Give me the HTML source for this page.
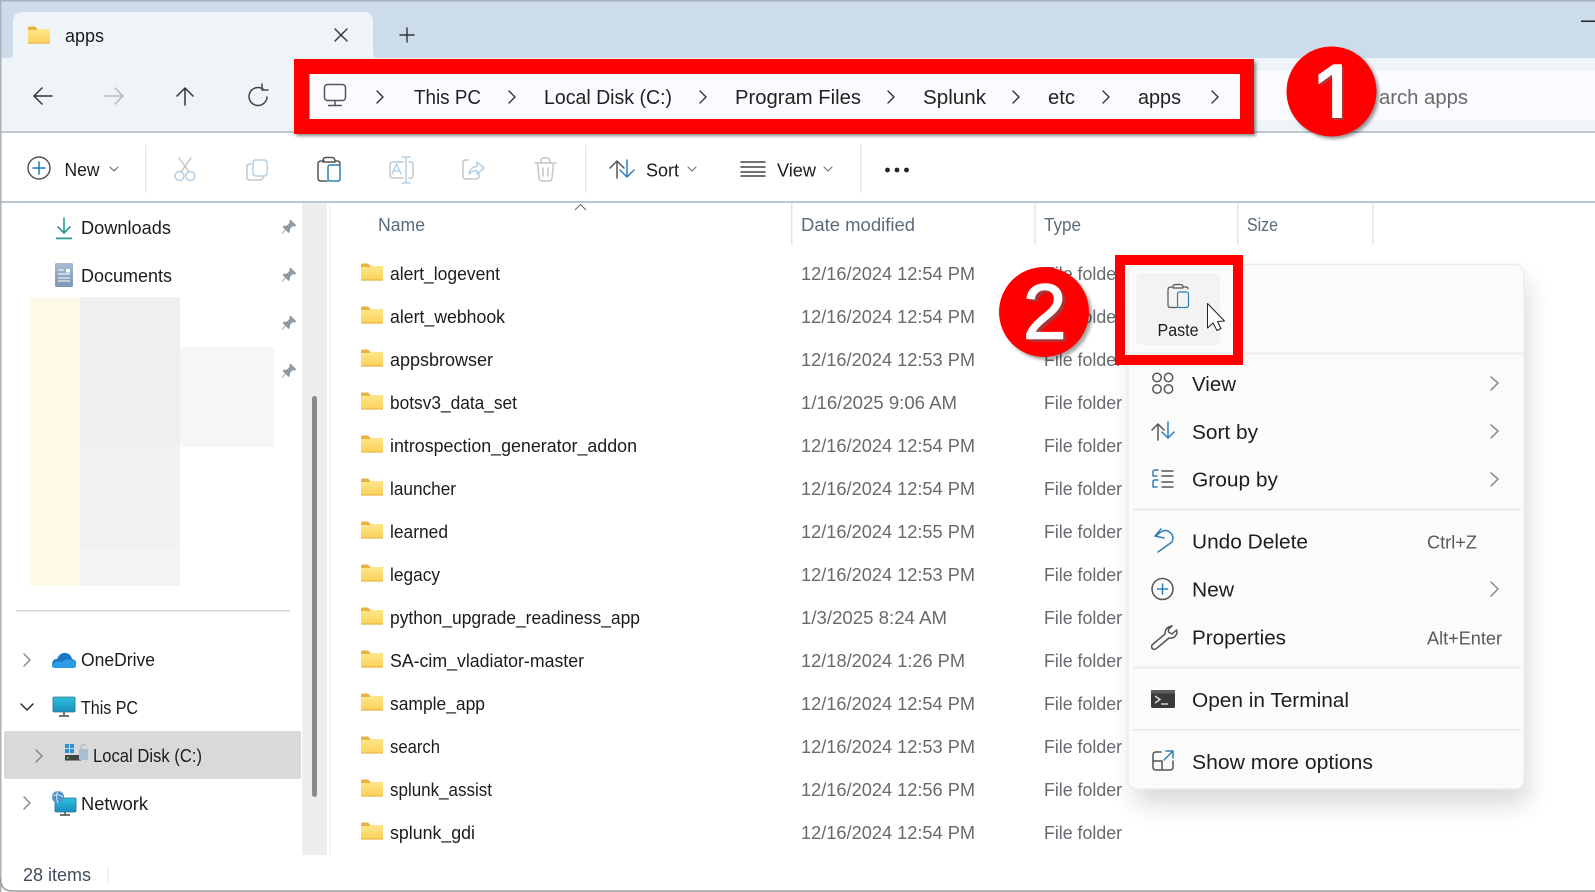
<!DOCTYPE html>
<html><head><meta charset="utf-8"><title>apps</title>
<style>
html,body{margin:0;padding:0;background:#fff;width:1595px;height:892px;overflow:hidden}
svg{display:block}
text{font-family:"Liberation Sans",sans-serif;font-size:18px;fill:#1c1c1c}
.g{fill:#666a6e}
.h{fill:#5c6b7a}
.a{font-size:20.5px;fill:#222}
.m{font-size:20px;fill:#1e1e1e}
.s{fill:#5a5a5a}
.ic{fill:none;stroke:#555;stroke-width:1.5;stroke-linecap:round;stroke-linejoin:round}
.bl{fill:none;stroke:#2f7fb8;stroke-width:1.5;stroke-linecap:round;stroke-linejoin:round}
.dis{fill:none;stroke:#c6c6c6;stroke-width:1.5;stroke-linecap:round;stroke-linejoin:round}
.dbl{fill:none;stroke:#b5d0e6;stroke-width:1.5;stroke-linecap:round;stroke-linejoin:round}
.ch{fill:none;stroke:#333;stroke-width:1.4;stroke-linecap:round;stroke-linejoin:round}
.cg{fill:none;stroke:#8a8a8a;stroke-width:1.5;stroke-linecap:round;stroke-linejoin:round}
</style></head><body>
<svg width="1595" height="892" viewBox="0 0 1595 892" xmlns="http://www.w3.org/2000/svg">
<defs>
<linearGradient id="fg" x1="0" y1="0" x2="0" y2="1"><stop offset="0" stop-color="#ffe68c"/><stop offset="1" stop-color="#fbd158"/></linearGradient>
<linearGradient id="mon" x1="0" y1="0" x2="0" y2="1"><stop offset="0" stop-color="#2cc0dc"/><stop offset="1" stop-color="#1a8fc0"/></linearGradient>
<linearGradient id="doc" x1="0" y1="0" x2="0" y2="1"><stop offset="0" stop-color="#a6bcd4"/><stop offset="1" stop-color="#7d96b2"/></linearGradient>
<symbol id="folder" viewBox="0 0 22 18" width="22" height="18">
<path d="M0 2 Q0 0.5 1.5 0.5 H7 L9.5 3 H22 V8 H0Z" fill="#e8b23c"/>
<path d="M0 4 H8 L10 3 H21 Q22 3 22 4 V16.5 Q22 17.5 21 17.5 H1 Q0 17.5 0 16.5Z" fill="url(#fg)"/>
<rect x="0" y="16.6" width="22" height="1" fill="#e0b040"/>
</symbol>
<symbol id="pin" viewBox="0 0 16 16" width="16" height="16">
<path d="M9.5 0.5 L15.5 6.5 L13.8 7.4 L11.8 7.2 L9 10 L8.8 13 L7.5 14 L4.8 11.2 L1 15 L0.5 14.5 L4.2 10.6 L1.6 8 L2.8 6.8 L5.8 6.6 L8.6 3.8 L8.4 2Z" fill="#8f9aa3"/>
</symbol>
<filter id="sh" x="-20%" y="-20%" width="140%" height="140%"><feGaussianBlur stdDeviation="12"/></filter>
<filter id="sm" x="-10%" y="-10%" width="120%" height="120%"><feGaussianBlur stdDeviation="1.5"/></filter>
<clipPath id="c1"><rect x="1300" y="50" width="60" height="68"/></clipPath>
<clipPath id="c1s"><rect x="1300" y="50" width="60" height="70"/></clipPath>
</defs>

<rect width="1595" height="892" fill="#fff"/>
<!-- title bar -->
<rect x="0" y="0" width="1595" height="58" fill="#cddcea"/>
<rect x="0" y="0" width="1595" height="1.5" fill="#a8b3bd"/>
<path d="M8 58 Q13 58 13 53 V22 Q13 12 23 12 H363 Q373 12 373 22 V53 Q373 58 378 58 Z" fill="#eff4f9"/>
<use href="#folder" x="28" y="26"/>
<text x="65" y="42" textLength="39" lengthAdjust="spacingAndGlyphs">apps</text>
<path d="M335 29 L347 41 M347 29 L335 41" class="ch" stroke="#333"/>
<path d="M407 28 V42 M400 35 H414" class="ch"/>
<rect x="1581" y="20.5" width="14" height="1.5" fill="#222"/>

<!-- nav band -->
<rect x="0" y="58" width="1595" height="73" fill="#eff4f9"/>
<rect x="0" y="131" width="1595" height="2" fill="#bcc7cf"/>
<path d="M52 96 H34 M42 88 L34 96 L42 104" class="ic" stroke="#333" style="stroke:#333"/>
<path d="M105 96 H123 M115 88 L123 96 L115 104" class="dis" style="stroke:#b5b9bd"/>
<path d="M185 105 V88 M177 96 L185 88 L193 96" class="ic" style="stroke:#333"/>
<path d="M263 89 A9 9 0 1 0 267 97 M262 84 V90 H268" class="ic" style="stroke:#444"/>

<!-- search -->
<rect x="1240" y="71" width="355" height="49" fill="#f9fbfe"/>
<text class="a" x="1379" y="104" textLength="89" lengthAdjust="spacingAndGlyphs" style="fill:#6a6a6a">arch apps</text>

<!-- command bar -->
<rect x="0" y="133" width="1595" height="68" fill="#fff"/>
<rect x="0" y="201" width="1595" height="2" fill="#bcc7cf"/>
<circle cx="39" cy="168" r="11" fill="none" stroke="#555" stroke-width="1.5"/>
<path d="M39 162 V174 M33 168 H45" class="bl" style="stroke:#1e78b4"/>
<text x="64.5" y="176" textLength="35" lengthAdjust="spacingAndGlyphs">New</text>
<path d="M110 167 L114 171 L118 167" class="cg" style="stroke-width:1;stroke:#666"/>
<rect x="145" y="145" width="1.5" height="48" fill="#e8e8e8"/>
<!-- scissors -->
<path d="M179 158 L189 172 M191 158 L181 172" class="dis"/>
<circle cx="179.500" cy="176" r="4.500" class="dbl"/><circle cx="190.500" cy="176" r="4.500" class="dbl"/>
<!-- copy -->
<path d="M251 164 H250 Q247 164 247 167 V177 Q247 180 250 180 H260 Q263 180 263 177" class="dis"/>
<rect x="253" y="160" width="14" height="16" rx="3" class="dbl"/>
<!-- paste -->
<path d="M324 161 H321 Q318 161 318 164 V178 Q318 181 321 181 H327" class="ic"/>
<path d="M323 161 Q323 157.500 326 157.500 H332 Q335 157.500 335 161 V162 H323Z M335 161 H337 Q340 161 340 164 V165" class="ic"/>
<rect x="328" y="165" width="12" height="16" rx="2" class="bl"/>
<!-- rename -->
<path d="M403 162 H393 Q390 162 390 165 V175 Q390 178 393 178 H403 M409 162 H411 Q413 162 413 165 V175 Q413 178 411 178 H409" class="dis"/>
<path d="M402 157 H410 M406 157 V183 M402 183 H410 M392 174 L396.500 164 L401 174 M394 171 H399" class="dbl"/>
<!-- share -->
<g transform="translate(-2,0)">
<path d="M470 160 H468 Q465 160 465 163 V176 Q465 179 468 179 H478 Q481 179 481 176 V174" class="dis"/>
<path d="M471 174 Q472 167 479 166.500 V162 L486 168 L479 174 V170.500 Q474 170.500 471 174Z" class="dbl"/>
</g>
<!-- delete -->
<path d="M535 163 H556 M541 163 V161 Q541 158 544 158 H547 Q550 158 550 161 V163 M537.500 163 L539 178 Q539.500 181 542 181 H549 Q551.500 181 552 178 L553.500 163 M543 168 V176 M548 168 V176" class="dis"/>
<rect x="585" y="145" width="1.5" height="48" fill="#e8e8e8"/>
<!-- sort -->
<path d="M617 178 V161 M610 168 L617 161 L624 168" class="ic"/>
<path d="M627 160 V177 M620 170 L627 177 L634 170" class="bl"/>
<text x="646" y="176.500" textLength="33" lengthAdjust="spacingAndGlyphs">Sort</text>
<path d="M688 167 L692 171 L696 167" class="cg" style="stroke-width:1;stroke:#666"/>
<path d="M741 162 H765 M741 167 H765 M741 172 H765 M741 176 H765" class="ic" style="stroke:#444"/>
<text x="777" y="176.500" textLength="39" lengthAdjust="spacingAndGlyphs">View</text>
<path d="M824 167 L828 171 L832 167" class="cg" style="stroke-width:1;stroke:#666"/>
<rect x="860" y="145" width="1.5" height="48" fill="#e8e8e8"/>
<circle cx="887.500" cy="170" r="2.400" fill="#222"/><circle cx="897" cy="170" r="2.400" fill="#222"/><circle cx="906.500" cy="170" r="2.400" fill="#222"/>

<!-- nav pane -->
<rect x="302" y="203" width="25" height="652" fill="#eeeeee"/>
<rect x="312" y="396" width="5" height="401" rx="2.500" fill="#8a8a8a"/>
<rect x="329" y="203" width="1.500" height="652" fill="#f2f2f2"/>
<path d="M64 218 V233 M58 227 L64 233 L70 227" fill="none" stroke="#2b9d90" stroke-width="1.6" stroke-linecap="round"/>
<rect x="56" y="237.500" width="16" height="1.800" fill="#2b9d90"/>
<text x="81" y="234" textLength="90" lengthAdjust="spacingAndGlyphs">Downloads</text>
<rect x="55" y="263" width="18" height="24" rx="1.500" fill="url(#doc)"/>
<path d="M58 270 H64 M58 274 H70 M58 278 H70 M58 281 H70" stroke="#fff" stroke-width="1"/><rect x="66" y="269" width="4" height="3.500" fill="#fff"/>
<text x="81" y="282" textLength="91" lengthAdjust="spacingAndGlyphs">Documents</text>
<use href="#pin" x="281" y="219"/><use href="#pin" x="281" y="267"/><use href="#pin" x="281" y="315"/><use href="#pin" x="281" y="363"/>
<rect x="30" y="297" width="50" height="289" fill="#fef8e8"/>
<rect x="80" y="297" width="100" height="150" fill="#efefef"/>
<rect x="80" y="447" width="100" height="100" fill="#f1f1f1"/>
<rect x="80" y="547" width="100" height="39" fill="#f4f4f4"/>
<rect x="180" y="347" width="94" height="100" fill="#f6f6f6"/>
<rect x="16" y="610" width="274" height="1.600" fill="#d8d8d8"/>

<path d="M24 654 L30 660 L24 666" class="cg"/>
<path d="M52 665 Q52 659 57 659 Q60 652 66 653 Q71 654 72 659 Q77 660 76 665 Q76 668 73 668 H55 Q52 668 52 665Z" fill="#1b74c8"/>
<path d="M62 662 Q66 658 71 660 Q76 660 76 665 Q76 668 73 668 H55 Q52 668 52 665 Q56 660 62 662Z" fill="#2e9be6"/>
<text x="81" y="666" textLength="74" lengthAdjust="spacingAndGlyphs">OneDrive</text>
<path d="M21 704 L27 710 L33 704" class="ch" style="stroke:#222"/>
<rect x="53" y="697" width="22" height="15" rx="1" fill="url(#mon)" stroke="#3a6e86" stroke-width=".8"/>
<path d="M64 712 V715 M59 716 H69" stroke="#444" stroke-width="1.400"/>
<text x="81" y="714" textLength="57" lengthAdjust="spacingAndGlyphs">This PC</text>
<rect x="4" y="731" width="297" height="48" rx="2" fill="#d9d9d9"/>
<path d="M36 750 L42 756 L36 762" class="cg"/>
<rect x="65" y="744" width="4" height="4" fill="#2a8fd8"/><rect x="70" y="744" width="4" height="4" fill="#2a8fd8"/><rect x="65" y="749" width="4" height="4" fill="#2a8fd8"/><rect x="70" y="749" width="4" height="4" fill="#2a8fd8"/>
<rect x="65" y="755" width="16" height="5.500" fill="#444"/><rect x="67" y="757" width="2" height="1.500" fill="#4ad04a"/>
<rect x="79" y="749" width="9" height="11" rx="1" fill="#a8bfd2"/><path d="M81 749 V746 Q83.500 743 86 746" fill="none" stroke="#a8bfd2" stroke-width="1.200"/>
<text x="93" y="762" textLength="109" lengthAdjust="spacingAndGlyphs">Local Disk (C:)</text>
<path d="M24 797 L30 803 L24 809" class="cg"/>
<rect x="55" y="798" width="21" height="14" rx="1" fill="url(#mon)" stroke="#3a6e86" stroke-width=".8"/>
<circle cx="58" cy="797" r="6" fill="#4f94c9"/><path d="M53 796 Q58 793 63 797 M58 791 Q55 796 58 803" stroke="#cfe6f5" stroke-width="1" fill="none"/>
<path d="M65 812 V814.500 M60 815 H70" stroke="#444" stroke-width="1.400"/>
<text x="81" y="810" textLength="67" lengthAdjust="spacingAndGlyphs">Network</text>

<!-- header -->
<text class="h" x="378" y="231" textLength="47" lengthAdjust="spacingAndGlyphs">Name</text>
<path d="M575 210 L580.500 204.500 L586 210" fill="none" stroke="#666" stroke-width="1"/>
<text class="h" x="801" y="231" textLength="114" lengthAdjust="spacingAndGlyphs">Date modified</text>
<text class="h" x="1044" y="231" textLength="37" lengthAdjust="spacingAndGlyphs">Type</text>
<text class="h" x="1247" y="231" textLength="31" lengthAdjust="spacingAndGlyphs">Size</text>
<rect x="791" y="203" width="1.500" height="42" fill="#e6e6e6"/><rect x="1034" y="203" width="1.500" height="42" fill="#e6e6e6"/><rect x="1237" y="203" width="1.500" height="42" fill="#e6e6e6"/><rect x="1372" y="203" width="1.500" height="42" fill="#e6e6e6"/>

<!-- rows -->
<use href="#folder" x="361" y="263"/><text x="390" y="280" textLength="110" lengthAdjust="spacingAndGlyphs">alert_logevent</text><text class="g" x="801" y="280" textLength="174" lengthAdjust="spacingAndGlyphs">12/16/2024 12:54 PM</text><text class="g" x="1044" y="280" textLength="78" lengthAdjust="spacingAndGlyphs">File folder</text>
<use href="#folder" x="361" y="306"/><text x="390" y="323" textLength="115" lengthAdjust="spacingAndGlyphs">alert_webhook</text><text class="g" x="801" y="323" textLength="174" lengthAdjust="spacingAndGlyphs">12/16/2024 12:54 PM</text><text class="g" x="1044" y="323" textLength="78" lengthAdjust="spacingAndGlyphs">File folder</text>
<use href="#folder" x="361" y="349"/><text x="390" y="366" textLength="103" lengthAdjust="spacingAndGlyphs">appsbrowser</text><text class="g" x="801" y="366" textLength="174" lengthAdjust="spacingAndGlyphs">12/16/2024 12:53 PM</text><text class="g" x="1044" y="366" textLength="78" lengthAdjust="spacingAndGlyphs">File folder</text>
<use href="#folder" x="361" y="392"/><text x="390" y="409" textLength="127" lengthAdjust="spacingAndGlyphs">botsv3_data_set</text><text class="g" x="801" y="409" textLength="156" lengthAdjust="spacingAndGlyphs">1/16/2025 9:06 AM</text><text class="g" x="1044" y="409" textLength="78" lengthAdjust="spacingAndGlyphs">File folder</text>
<use href="#folder" x="361" y="435"/><text x="390" y="452" textLength="247" lengthAdjust="spacingAndGlyphs">introspection_generator_addon</text><text class="g" x="801" y="452" textLength="174" lengthAdjust="spacingAndGlyphs">12/16/2024 12:54 PM</text><text class="g" x="1044" y="452" textLength="78" lengthAdjust="spacingAndGlyphs">File folder</text>
<use href="#folder" x="361" y="478"/><text x="390" y="495" textLength="66" lengthAdjust="spacingAndGlyphs">launcher</text><text class="g" x="801" y="495" textLength="174" lengthAdjust="spacingAndGlyphs">12/16/2024 12:54 PM</text><text class="g" x="1044" y="495" textLength="78" lengthAdjust="spacingAndGlyphs">File folder</text>
<use href="#folder" x="361" y="521"/><text x="390" y="538" textLength="58" lengthAdjust="spacingAndGlyphs">learned</text><text class="g" x="801" y="538" textLength="174" lengthAdjust="spacingAndGlyphs">12/16/2024 12:55 PM</text><text class="g" x="1044" y="538" textLength="78" lengthAdjust="spacingAndGlyphs">File folder</text>
<use href="#folder" x="361" y="564"/><text x="390" y="581" textLength="50" lengthAdjust="spacingAndGlyphs">legacy</text><text class="g" x="801" y="581" textLength="174" lengthAdjust="spacingAndGlyphs">12/16/2024 12:53 PM</text><text class="g" x="1044" y="581" textLength="78" lengthAdjust="spacingAndGlyphs">File folder</text>
<use href="#folder" x="361" y="607"/><text x="390" y="624" textLength="250" lengthAdjust="spacingAndGlyphs">python_upgrade_readiness_app</text><text class="g" x="801" y="624" textLength="146" lengthAdjust="spacingAndGlyphs">1/3/2025 8:24 AM</text><text class="g" x="1044" y="624" textLength="78" lengthAdjust="spacingAndGlyphs">File folder</text>
<use href="#folder" x="361" y="650"/><text x="390" y="667" textLength="194" lengthAdjust="spacingAndGlyphs">SA-cim_vladiator-master</text><text class="g" x="801" y="667" textLength="164" lengthAdjust="spacingAndGlyphs">12/18/2024 1:26 PM</text><text class="g" x="1044" y="667" textLength="78" lengthAdjust="spacingAndGlyphs">File folder</text>
<use href="#folder" x="361" y="693"/><text x="390" y="710" textLength="95" lengthAdjust="spacingAndGlyphs">sample_app</text><text class="g" x="801" y="710" textLength="174" lengthAdjust="spacingAndGlyphs">12/16/2024 12:54 PM</text><text class="g" x="1044" y="710" textLength="78" lengthAdjust="spacingAndGlyphs">File folder</text>
<use href="#folder" x="361" y="736"/><text x="390" y="753" textLength="50" lengthAdjust="spacingAndGlyphs">search</text><text class="g" x="801" y="753" textLength="174" lengthAdjust="spacingAndGlyphs">12/16/2024 12:53 PM</text><text class="g" x="1044" y="753" textLength="78" lengthAdjust="spacingAndGlyphs">File folder</text>
<use href="#folder" x="361" y="779"/><text x="390" y="796" textLength="102" lengthAdjust="spacingAndGlyphs">splunk_assist</text><text class="g" x="801" y="796" textLength="174" lengthAdjust="spacingAndGlyphs">12/16/2024 12:56 PM</text><text class="g" x="1044" y="796" textLength="78" lengthAdjust="spacingAndGlyphs">File folder</text>
<use href="#folder" x="361" y="822"/><text x="390" y="839" textLength="85" lengthAdjust="spacingAndGlyphs">splunk_gdi</text><text class="g" x="801" y="839" textLength="174" lengthAdjust="spacingAndGlyphs">12/16/2024 12:54 PM</text><text class="g" x="1044" y="839" textLength="78" lengthAdjust="spacingAndGlyphs">File folder</text>

<!-- status -->
<rect x="0" y="855" width="1595" height="37" fill="#fff"/>
<text x="23" y="881" textLength="68" lengthAdjust="spacingAndGlyphs" style="fill:#3f4d5c">28 items</text>
<rect x="107.500" y="866" width="1.500" height="16" fill="#efefef"/>
<rect x="0" y="0" width="1.500" height="892" fill="#a8b3bd"/>
<path d="M0.500 878 Q0.500 891 12 891 H1595" fill="none" stroke="#9a9a9a" stroke-width="1.500"/>

<!-- context menu -->
<rect x="1133" y="280" width="396" height="525" rx="12" fill="#000" opacity=".14" filter="url(#sh)"/>
<rect x="1128" y="264.500" width="396" height="524.500" rx="9" fill="#fbfbfb" stroke="#ececec" stroke-width="1.500"/>
<rect x="1128" y="352.500" width="396" height="2" fill="#ededed"/>
<rect x="1133" y="508.500" width="388" height="2" fill="#ededed"/>
<rect x="1133" y="666.500" width="388" height="2" fill="#ededed"/>
<rect x="1133" y="729" width="388" height="2" fill="#ededed"/>
<rect x="1136" y="273" width="84" height="72" rx="6" fill="#f3f3f3"/>
<path d="M1172 287 H1171 Q1168 287 1168 290 V305 Q1168 307.500 1171 307.500 H1177" class="ic" style="stroke-width:1.200"/>
<path d="M1173 287 Q1173 284.500 1175.500 284.500 H1180.500 Q1183 284.500 1183 287 V288 H1173Z M1183 287 H1186 Q1188 287 1188 289" class="ic" style="stroke-width:1.200"/>
<rect x="1177.500" y="292" width="11" height="15.500" rx="2" class="bl" style="stroke-width:1.200"/>
<text x="1157.500" y="336" textLength="41" lengthAdjust="spacingAndGlyphs" style="font-size:17.500px">Paste</text>
<!-- cursor -->
<path d="M1207.500 303.500 V328 L1213 323 L1217 330.500 L1221 328.500 L1217.500 321.500 L1224.500 321 Z" fill="#fff" stroke="#222" stroke-width="1" stroke-linejoin="round"/>

<!-- view -->
<circle cx="1157" cy="377.500" r="4.200" class="ic"/><circle cx="1168.500" cy="377.500" r="4.200" class="ic"/><circle cx="1157" cy="389" r="4.200" class="ic"/><circle cx="1168.500" cy="389" r="4.200" class="ic"/>
<text class="m" x="1192" y="391" textLength="44" lengthAdjust="spacingAndGlyphs">View</text>
<path d="M1491 377 L1498 383 L1491 390" class="cg"/>
<!-- sort by -->
<path d="M1158 440 V424 M1152 430 L1158 424 L1164 430" class="ic"/>
<path d="M1168 422 V438 M1162 432 L1168 438 L1174 432" class="bl"/>
<text class="m" x="1192" y="439" textLength="66" lengthAdjust="spacingAndGlyphs">Sort by</text>
<path d="M1491 425 L1498 431 L1491 438" class="cg"/>
<!-- group by -->
<path d="M1158 470 H1155 Q1153 470 1153 472 V476 H1157 M1158 480 H1155 Q1153 480 1153 482 V487 H1157" class="bl"/>
<path d="M1162 471 H1173 M1162 476 H1173 M1162 482 H1173 M1162 487 H1173" class="ic"/>
<text class="m" x="1192" y="486.500" textLength="86" lengthAdjust="spacingAndGlyphs">Group by</text>
<path d="M1491 473 L1498 479 L1491 486" class="cg"/>
<!-- undo -->
<path d="M1161 529 L1155 536 L1164 538 M1156 536 Q1163 529 1168 531 Q1175 535 1172 542 L1158 552" class="bl"/>
<text class="m" x="1192" y="548.500" textLength="116" lengthAdjust="spacingAndGlyphs">Undo Delete</text>
<text class="s" x="1427" y="548.500" textLength="50" lengthAdjust="spacingAndGlyphs">Ctrl+Z</text>
<!-- new -->
<circle cx="1162.500" cy="589" r="10.500" class="ic"/>
<path d="M1162.500 584 V594 M1157.500 589 H1167.500" class="bl"/>
<text class="m" x="1192" y="596.500" textLength="42" lengthAdjust="spacingAndGlyphs">New</text>
<path d="M1491 582 L1498 589 L1491 596" class="cg"/>
<!-- properties -->
<path d="M1172 626 Q1165 627 1165 634 L1152 645 Q1151 648 1153 649 Q1155 650 1157 648 L1169 638 Q1175 639 1177 633 Q1177 631 1176.500 630 L1172 634 L1168.500 632 L1168.500 629Z" class="ic"/>
<text class="m" x="1192" y="644.500" textLength="94" lengthAdjust="spacingAndGlyphs">Properties</text>
<text class="s" x="1427" y="644.500" textLength="75" lengthAdjust="spacingAndGlyphs">Alt+Enter</text>
<!-- terminal -->
<rect x="1151" y="690" width="24" height="18" rx="1.500" fill="#3a3a3a"/>
<rect x="1151" y="690" width="24" height="3.500" fill="#5c5c5c"/>
<path d="M1155 696 L1160 699.500 L1155 703" fill="none" stroke="#ddd" stroke-width="1.400"/>
<path d="M1161 704 H1168" stroke="#ddd" stroke-width="1.400"/>
<text class="m" x="1192" y="707" textLength="157" lengthAdjust="spacingAndGlyphs">Open in Terminal</text>
<!-- show more -->
<path d="M1161 752 H1156 Q1153 752 1153 755 V767 Q1153 770 1156 770 H1170 Q1173 770 1173 767 V761 M1153 761 H1162 V770" class="ic"/>
<path d="M1164 760 L1173 751 M1166 751 H1173 V758" class="bl"/>
<text class="m" x="1192" y="769" textLength="181" lengthAdjust="spacingAndGlyphs">Show more options</text>

<!-- annotations -->
<path fill-rule="evenodd" d="M296 62 H1256 V136 H296Z" fill="#000" opacity=".45" filter="url(#sm)"/>
<path fill-rule="evenodd" d="M294 59 H1254 V134 H294Z M309.500 74 V119 H1240 V74Z" fill="#f00"/>
<rect x="309.500" y="74" width="930.500" height="45" fill="#f9fbfe"/>
<rect x="324.500" y="84.500" width="21" height="16" rx="3" fill="none" stroke="#555" stroke-width="1.500"/>
<path d="M335 100.500 V105 M328 105.500 H342" stroke="#555" stroke-width="1.500"/>
<path d="M377 91 L383 97 L377 103 M509 91 L515 97 L509 103 M700 91 L706 97 L700 103 M888 91 L894 97 L888 103 M1013 91 L1019 97 L1013 103 M1103 91 L1109 97 L1103 103 M1212 91 L1218 97 L1212 103" class="ch"/>
<text class="a" x="414" y="104" textLength="67" lengthAdjust="spacingAndGlyphs">This PC</text>
<text class="a" x="544" y="104" textLength="128" lengthAdjust="spacingAndGlyphs">Local Disk (C:)</text>
<text class="a" x="735" y="104" textLength="126" lengthAdjust="spacingAndGlyphs">Program Files</text>
<text class="a" x="923" y="104" textLength="63" lengthAdjust="spacingAndGlyphs">Splunk</text>
<text class="a" x="1048" y="104" textLength="27" lengthAdjust="spacingAndGlyphs">etc</text>
<text class="a" x="1138" y="104" textLength="43" lengthAdjust="spacingAndGlyphs">apps</text>

<circle cx="1334" cy="94" r="45" fill="#000" opacity=".4" filter="url(#sm)"/>
<circle cx="1331.500" cy="91.500" r="45" fill="#f00"/>
<g clip-path="url(#c1s)"><text x="1313" y="128" style="font-size:88px;fill:#a83838;stroke:#a83838;stroke-width:2">1</text></g>
<g clip-path="url(#c1)"><text x="1311" y="126" style="font-size:88px;fill:#fff;stroke:#fff;stroke-width:2">1</text></g>

<path fill-rule="evenodd" d="M1115 255 H1243 V365 H1115Z M1125 265 V355 H1233 V265Z" fill="#f00"/>

<circle cx="1047" cy="315" r="45" fill="#000" opacity=".35" filter="url(#sm)"/>
<circle cx="1044" cy="312" r="45" fill="#f00"/>
<text x="1026" y="341" style="font-size:78px;fill:#a83838;stroke:#a83838;stroke-width:1.500">2</text>
<text x="1023" y="338.500" style="font-size:78px;fill:#fff;stroke:#fff;stroke-width:1.500">2</text>
</svg>
</body></html>
